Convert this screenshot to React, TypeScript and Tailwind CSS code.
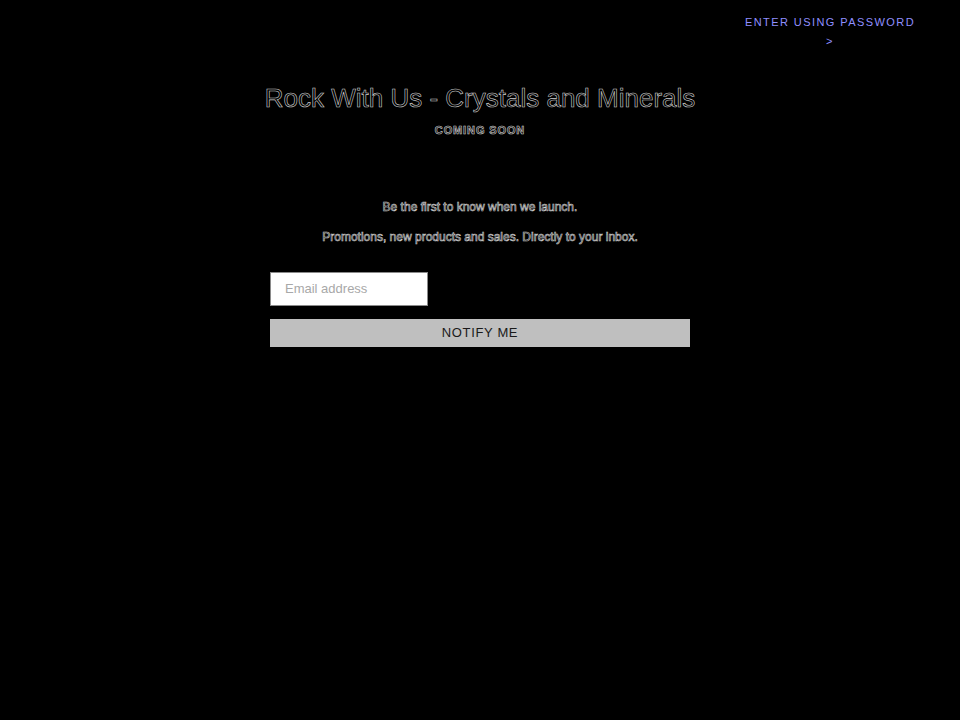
import React from 'react';

const ghost = 'text-black [-webkit-text-stroke:0.6px_#cfcfcf]';

const App: React.FC = () => {
  return (
    <div className="min-h-[720px] w-full bg-black font-['Liberation_Sans',Arial,sans-serif]">
      {/* Password link */}
      <div className="flex justify-end pr-[43px] pt-[13px]">
        <a href="#" className="flex w-[174px] flex-col items-center text-[11px] leading-[19px] tracking-[0.13em] text-[#8f8fff]">
          <span>ENTER USING PASSWORD</span>
          <span>&gt;</span>
        </a>
      </div>

      <div className="mx-auto flex w-[420px] flex-col items-center">
        {/* Heading */}
        <h1 className={`mt-[32px] whitespace-nowrap text-[26px] leading-[30px] ${ghost}`}>
          Rock With Us - Crystals and Minerals
        </h1>
        <p className={`mt-[9px] text-[11px] font-bold tracking-[0.08em] ${ghost}`}>COMING SOON</p>

        {/* Intro */}
        <p className={`mt-[59px] text-[12px] ${ghost}`}>Be the first to know when we launch.</p>
        <p className={`mt-[12px] text-[12px] ${ghost}`}>
          Promotions, new products and sales. Directly to your inbox.
        </p>

        {/* Form */}
        <form className="mt-[26px] flex w-full flex-col gap-[13px]">
          <input
            type="email"
            placeholder="Email address"
            className="h-[34px] w-[158px] border border-[#8a8a8a] bg-white px-[14px] text-[13px] text-black placeholder:text-[#a8a8a8]"
          />
          <button
            type="button"
            className="h-[28px] w-full bg-[#bfbfbf] text-[13px] tracking-[0.05em] text-[#1a1a1a]"
          >
            NOTIFY ME
          </button>
        </form>
      </div>
    </div>
  );
};

export default App;
